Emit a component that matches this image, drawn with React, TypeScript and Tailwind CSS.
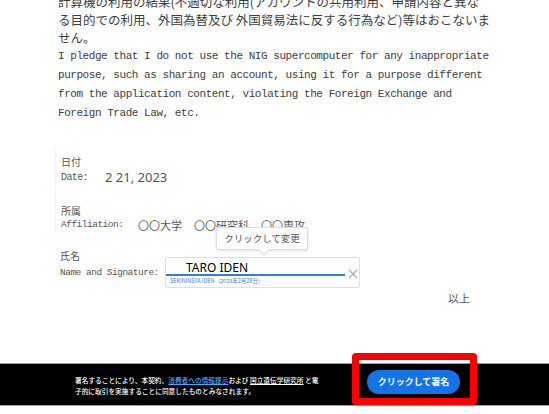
import React from "react";

const jpLines = [
  "計算機の利用の結果(不適切な利用(アカウントの共用利用、申請内容と異な",
  "る目的での利用、外国為替及び 外国貿易法に反する行為など)等はおこないま",
  "せん。",
];

const enLines = [
  "I pledge that I do not use the NIG supercomputer for any inappropriate",
  "purpose, such as sharing an account, using it for a purpose different",
  "from the application content, violating the Foreign Exchange and",
  "Foreign Trade Law, etc.",
];

const jp = "font-['Noto_Sans_CJK_JP',sans-serif]";
const mono = "font-['Liberation_Mono','Noto_Sans_CJK_JP',monospace]";

export default function App() {
  return (
    <div className="relative w-[549px] h-[414px] overflow-hidden bg-white flex flex-col">
      {/* document body */}
      <div className="flex-1 overflow-hidden pl-[58px] pr-[40px]">
        <div className={`-mt-[7px] text-[12.5px] leading-[18px] text-[#3d3d3d] whitespace-nowrap ${jp}`}>
          {jpLines.map((l) => (
            <div key={l}>{l}</div>
          ))}
        </div>
        <div className={`text-[11px] leading-[19px] tracking-[-0.45px] text-[#3d3d3d] whitespace-nowrap ${mono}`}>
          {enLines.map((l) => (
            <div key={l}>{l}</div>
          ))}
        </div>

        <div className="mt-[26px] -ml-[3px] pl-[5px] pt-[5px] border-l border-[#f3f3f3] w-[300px]">
          <div className={`text-[10px] leading-[15px] text-[#555] ${jp}`}>日付</div>
          <div className="flex items-center h-[16px]">
            <span className={`w-[44px] text-[10px] tracking-[-0.6px] text-[#555] ${mono}`}>Date:</span>
            <span className="text-[13px] leading-[16px] text-[#555] font-['Noto_Sans',sans-serif]">2 21, 2023</span>
          </div>
          <div className={`mt-[18px] text-[10px] leading-[15px] text-[#555] ${jp}`}>所属</div>
          <div className="flex items-center h-[15px] whitespace-nowrap">
            <span className={`w-[77px] text-[9.5px] tracking-[-0.5px] text-[#555] ${mono}`}>Affiliation:</span>
            <span className={`flex gap-[12px] text-[11px] leading-[15px] text-[#555] ${jp}`}>
              <span>〇〇大学</span>
              <span>〇〇研究科</span>
              <span>〇〇専攻</span>
            </span>
          </div>
        </div>

        <div className="ml-[2px]">
          <div className={`mt-[15px] text-[10px] leading-[15px] text-[#555] ${jp}`}>氏名</div>
          <div className="-mt-[6px] flex items-start">
            <span className={`mt-[8px] w-[105px] text-[9.5px] leading-[15px] tracking-[-0.5px] text-[#555] whitespace-nowrap ${mono}`}>
              Name and Signature:
            </span>
            <div className="w-[195px] h-[31px] border border-[#d3e1f0] rounded-[2px] bg-white flex flex-col">
              <div className="flex items-end">
                <div className="w-[179px] h-[18px] border-b-2 border-[#2f7fe3] pl-[20px] pt-[3px] text-[12px] leading-[13px] text-black font-['Noto_Sans',sans-serif]">
                  TARO IDEN
                </div>
                <svg className="ml-[3px] mb-[-3px]" width="10" height="10" viewBox="0 0 10 10">
                  <path d="M1 1L9 9M9 1L1 9" stroke="#a8a8a8" strokeWidth="1.2" />
                </svg>
              </div>
              <div className={`pl-[4px] mt-[2px] text-[5.5px] leading-[7px] text-[#3c7ad6] whitespace-nowrap ${jp}`}>
                SEKININSYA IDEN&nbsp;&nbsp;&nbsp;(2023年2月28日)
              </div>
            </div>
          </div>
          <div className="mt-[3px] flex justify-end pr-[39px]">
            <span className={`text-[11px] leading-[15px] text-[#555] ${jp}`}>以上</span>
          </div>
        </div>
      </div>

      {/* bottom sign bar */}
      <div className="h-[43px] bg-black border-y border-[#9a9a9a] flex items-start pl-[75px]">
        <div className={`mt-[11px] w-[292px] text-[6.7px] leading-[11px] font-medium text-white whitespace-nowrap ${jp}`}>
          <div>
            署名することにより、本契約、<span className="text-[#4ea6ff] underline">消費者への情報提示</span>および{" "}
            <span className="underline">国立遺伝学研究所</span> と電
          </div>
          <div>子的に取引を実施することに同意したものとみなされます。</div>
        </div>
        <button className={`mt-[6px] w-[93px] h-[24px] rounded-full bg-[#1473e6] text-white text-[9px] font-bold ${jp}`}>
          クリックして署名
        </button>
      </div>
      <div className="h-[8px] bg-white" />

      {/* tooltip over the field */}
      <div className={`absolute left-[216px] top-[227px] w-[92px] h-[23px] bg-white border border-[#dedede] rounded-[2px] shadow-[0_1px_3px_rgba(0,0,0,0.12)] flex items-center justify-center text-[9.5px] text-[#555] ${jp}`}>
        クリックして変更
        <span className="absolute left-[43px] -bottom-[5px] w-[8px] h-[8px] bg-white border-r border-b border-[#dedede] rotate-45" />
      </div>

      {/* red highlight annotation */}
      <div className="absolute left-[352px] top-[353px] w-[125px] h-[52px] border-[7px] border-[#ff0000] rounded-[4px]" />
    </div>
  );
}
